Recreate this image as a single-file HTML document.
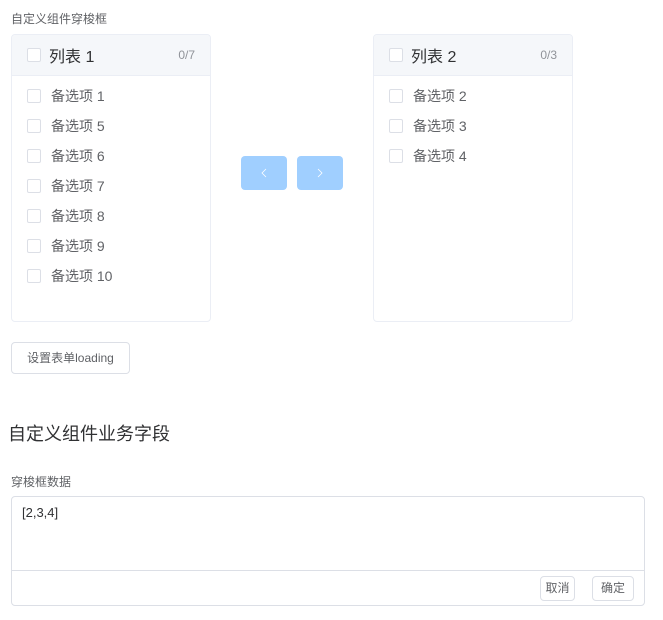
<!DOCTYPE html><html><head><meta charset="utf-8"><style>
*{box-sizing:border-box;margin:0;padding:0}
body{width:663px;height:620px;background:#fff;font-family:"Liberation Sans","Noto Sans CJK SC",sans-serif;color:#606266;position:relative;overflow:hidden}
.a{position:absolute}
.panel{position:absolute;top:34px;width:200px;height:288px;border:1px solid #ebeef5;border-radius:4px;overflow:hidden}
.hd{height:41px;background:#f5f7fa;border-bottom:1px solid #ebeef5;position:relative}
.cb{position:absolute;width:14px;height:14px;border:1px solid #dcdfe6;border-radius:2px;background:#fff}
.t{position:absolute;left:37px;top:8px;font-size:16px;color:#303133}
.cnt{position:absolute;right:15px;top:13px;font-size:12px;color:#909399}
.it{position:absolute;left:39px;font-size:14px;color:#606266}
.btn{position:absolute;background:#a0cfff;border-radius:4px;width:46px;height:34px;top:156px}
.wb{position:absolute;border:1px solid #dcdfe6;border-radius:4px;font-size:12px;color:#606266;text-align:center;background:#fff}
</style></head><body>
<div class="a" style="left:11px;top:10px;font-size:12px">自定义组件穿梭框</div>
<div class="panel" style="left:11px">
<div class="hd"><div class="cb" style="left:15px;top:13px"></div><div class="t">列表 1</div><div class="cnt">0/7</div></div>
<div class="cb" style="left:15px;top:54px"></div><div class="it" style="top:51px">备选项 1</div>
<div class="cb" style="left:15px;top:84px"></div><div class="it" style="top:81px">备选项 5</div>
<div class="cb" style="left:15px;top:114px"></div><div class="it" style="top:111px">备选项 6</div>
<div class="cb" style="left:15px;top:144px"></div><div class="it" style="top:141px">备选项 7</div>
<div class="cb" style="left:15px;top:174px"></div><div class="it" style="top:171px">备选项 8</div>
<div class="cb" style="left:15px;top:204px"></div><div class="it" style="top:201px">备选项 9</div>
<div class="cb" style="left:15px;top:234px"></div><div class="it" style="top:231px">备选项 10</div>
</div>
<div class="btn" style="left:241px"><svg width="46" height="34"><path d="M25 13l-4 4 4 4" stroke="#fff" fill="none" stroke-width="0.8"/></svg></div>
<div class="btn" style="left:297px"><svg width="46" height="34"><path d="M21 13l4 4-4 4" stroke="#fff" fill="none" stroke-width="0.8"/></svg></div>
<div class="panel" style="left:373px">
<div class="hd"><div class="cb" style="left:15px;top:13px"></div><div class="t">列表 2</div><div class="cnt">0/3</div></div>
<div class="cb" style="left:15px;top:54px"></div><div class="it" style="top:51px">备选项 2</div>
<div class="cb" style="left:15px;top:84px"></div><div class="it" style="top:81px">备选项 3</div>
<div class="cb" style="left:15px;top:114px"></div><div class="it" style="top:111px">备选项 4</div>
</div>
<div class="wb" style="left:11px;top:342px;width:119px;height:32px;line-height:30px">设置表单loading</div>
<div class="a" style="left:8px;top:420px;font-size:18px;color:#303133">自定义组件业务字段</div>
<div class="a" style="left:11px;top:473px;font-size:12px">穿梭框数据</div>
<div class="a" style="left:11px;top:496px;width:634px;height:110px;border:1px solid #dcdfe6;border-radius:4px">
<div class="a" style="left:10px;top:8px;font-size:13px;color:#303133">[2,3,4]</div>
<div class="a" style="left:0;top:73px;width:632px;border-top:1px solid #dcdfe6"></div>
<div class="wb" style="left:528px;top:79px;width:35px;height:25px;line-height:23px">取消</div>
<div class="wb" style="left:580px;top:79px;width:42px;height:25px;line-height:23px">确定</div>
</div>
</body></html>
